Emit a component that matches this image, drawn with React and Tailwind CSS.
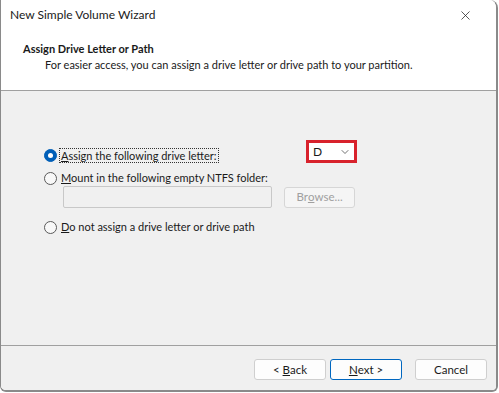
import { ChevronDown, X } from "lucide-react";

const font = { fontFamily: 'Lato, "Liberation Sans", Arial, sans-serif' };

function Radio({ checked }) {
  return (
    <span
      className={
        "flex h-[13px] w-[13px] shrink-0 items-center justify-center rounded-full border " +
        (checked ? "border-[#005fb8] bg-[#005fb8]" : "border-[#5a5a5a] bg-[#f8f8f8]")
      }
    >
      {checked && <span className="h-[5px] w-[5px] rounded-full bg-white" />}
    </span>
  );
}

function Button({ children, primary, disabled, className = "" }) {
  return (
    <button
      className={
        "flex h-[21px] items-center justify-center rounded-[3px] border text-[11.5px] " +
        (primary
          ? "border-[#0067c0] bg-[#fdfdfd] text-[#1a1a1a]"
          : disabled
          ? "border-[#d6d6d6] bg-[#f5f5f5] text-[#a0a0a0]"
          : "border-[#cfcfcf] bg-[#fdfdfd] text-[#1a1a1a]") +
        " " +
        className
      }
    >
      {children}
    </button>
  );
}

export default function App() {
  return (
    <div className="h-[393px] w-[499px] bg-white text-[11px] text-[#1a1a1a]" style={font}>
      <div className="flex h-[392px] w-[498px] flex-col overflow-hidden rounded-br-[6px] rounded-tr-[8px] rounded-bl-[6px] border-b-2 border-l border-r-2 border-[#8a8a8a]">
        {/* title bar */}
        <div className="flex h-[30px] shrink-0 items-center justify-between bg-white pl-[9px] pr-[23px]">
          <span className="text-[12px]">New Simple Volume Wizard</span>
          <X size={15} strokeWidth={1.2} className="text-[#222]" />
        </div>

        {/* header */}
        <div className="h-[61px] shrink-0 border-b border-[#a0a0a0] bg-white pl-[22px] pt-[11px]">
          <div className="text-[11px] font-bold leading-[15px]">Assign Drive Letter or Path</div>
          <div className="pl-[22px] pt-[1px] text-[11px] leading-[15px]">
            For easier access, you can assign a drive letter or drive path to your partition.
          </div>
        </div>

        {/* body */}
        <div className="flex-1 bg-[#f0f0f0] pl-[43px] pt-[49px]">
          <div className="flex h-[30px] items-center">
            <div className="flex w-[262px] items-center">
              <Radio checked />
              <span className="ml-[2px] border border-dotted border-[#333] px-[1px] leading-[13px]">
                <span className="underline">A</span>ssign the following drive letter:
              </span>
            </div>
            <div className="flex h-[23px] w-[51px] items-center justify-between self-start border-[3px] border-[#d8222c] bg-white pl-[4px] pr-[3px]">
              <span className="text-[12px]">D</span>
              <ChevronDown size={12} strokeWidth={1.4} className="text-[#333]" />
            </div>
          </div>
          <div className="flex h-[16px] items-center">
            <Radio />
            <span className="ml-[4px]">
              <span className="underline">M</span>ount in the following empty NTFS folder:
            </span>
          </div>
          <div className="flex items-center pl-[19px]">
            <div className="h-[22px] w-[209px] rounded-[2px] border border-[#c8c8c8] bg-[#f0f0f0]" />
            <Button disabled className="ml-[12px] w-[71px]">
              Br<span className="underline">o</span>wse...
            </Button>
          </div>
          <div className="mt-[10px] flex h-[18px] items-center">
            <Radio />
            <span className="ml-[4px]">
              <span className="underline">D</span>o not assign a drive letter or drive path
            </span>
          </div>
        </div>

        {/* footer */}
        <div className="flex h-[45px] shrink-0 items-start border-t border-[#a0a0a0] bg-[#f0f0f0] pl-[253px] pt-[13px]">
          <Button className="w-[72px]">
            &lt; <span className="ml-[3px] underline">B</span>ack
          </Button>
          <Button primary className="ml-[4px] w-[72px]">
            <span className="underline">N</span>ext &gt;
          </Button>
          <Button className="ml-[13px] w-[72px]">Cancel</Button>
        </div>
      </div>
    </div>
  );
}
